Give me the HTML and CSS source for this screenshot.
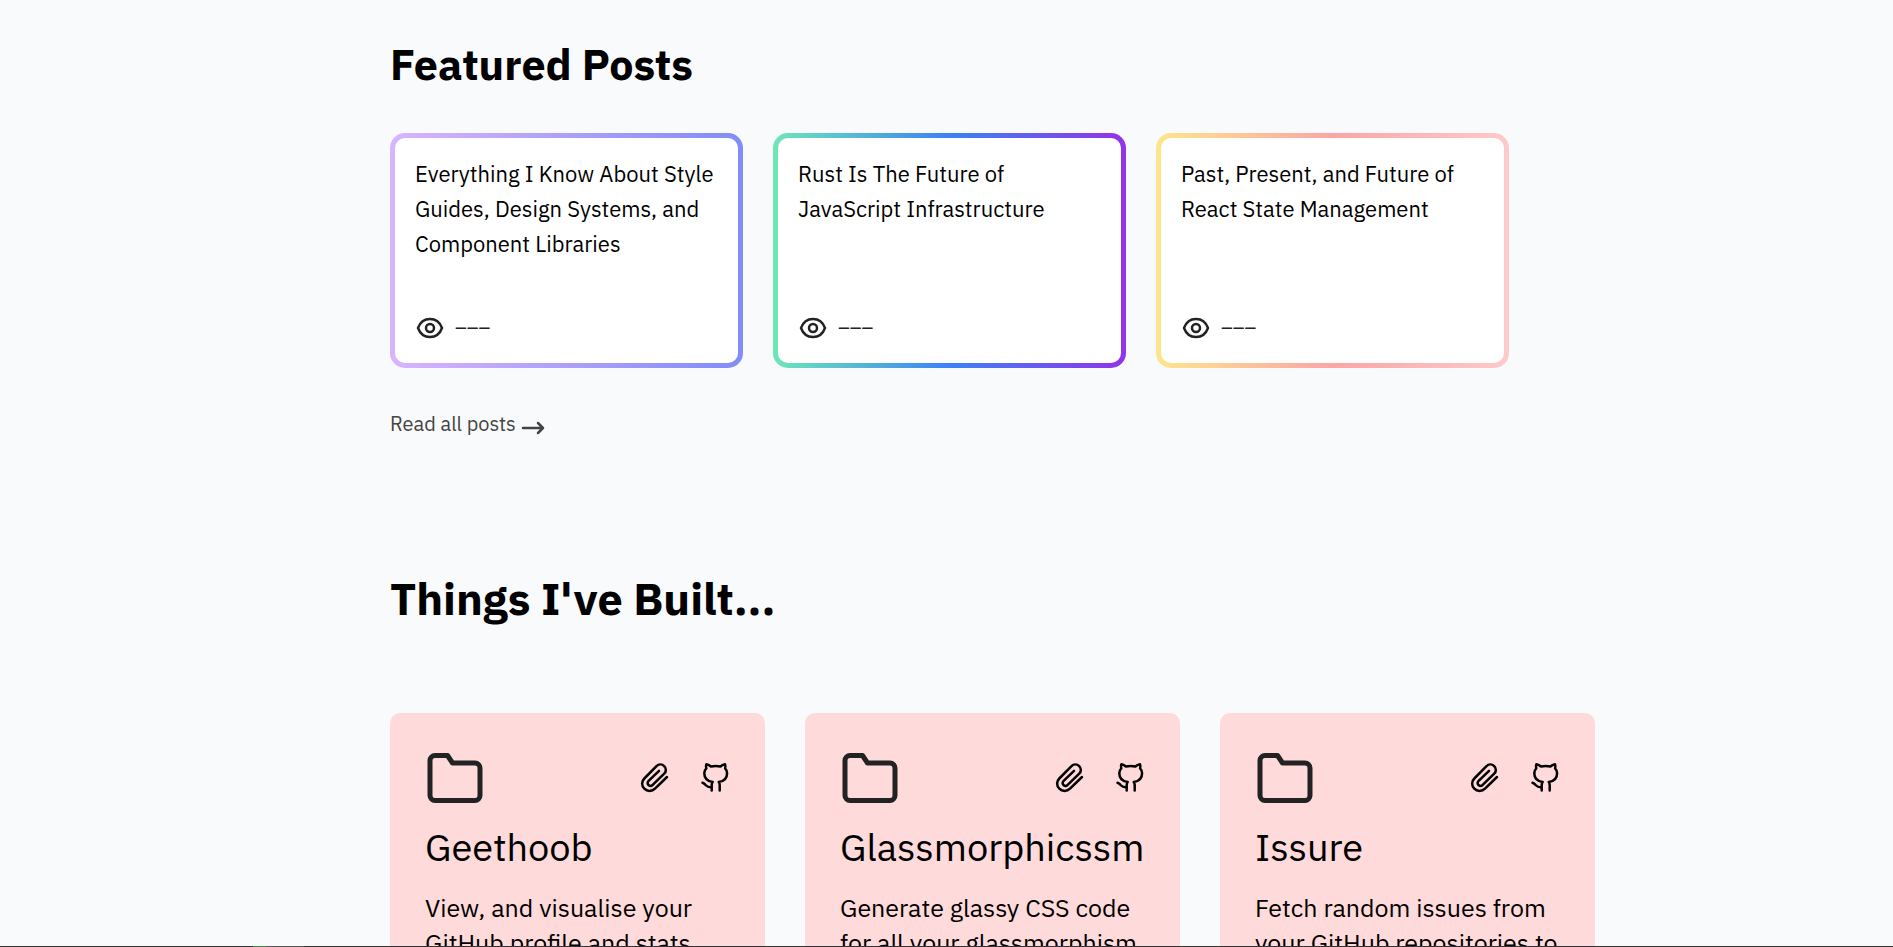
FILE: index.html
```html
<!DOCTYPE html>
<html lang="en">
<head>
<meta charset="utf-8">
<title>Featured Posts</title>
<link rel="stylesheet" href="styles.css">
</head>
<body>
<svg class="sprite" aria-hidden="true">
  <symbol id="eye" viewBox="0 0 30 30"><path d="M3 15C5 9.500 9.500 6 15 6s10 3.500 12 9c-2 5.500-6.500 9-12 9S5 20.500 3 15Z"/><circle cx="15" cy="15" r="4"/></symbol>
  <symbol id="arrow" viewBox="0 0 24 16"><path d="M2 8h20M17 3l5 5-5 5"/></symbol>
  <symbol id="folder" viewBox="0 0 24 24"><path d="M22 19a2 2 0 0 1-2 2H4a2 2 0 0 1-2-2V5a2 2 0 0 1 2-2h5l2 3h9a2 2 0 0 1 2 2z"/></symbol>
  <symbol id="clip" viewBox="0 0 30 32"><path d="M27 15 15 26.700c-3 2.900-7.800 2.900-10.700 0s-2.900-7.300 0-10.200L16.500 4.100c2.200-2.200 5.500-2.200 7.700 0s2.200 5.400 0 7.600L12.700 22.900c-1.300 1.300-3 1.300-4.200.1s-1.200-2.900.1-4.200L19 8.800"/></symbol>
  <symbol id="github" viewBox="0 0 30 32"><path d="M11.700 28.500V23c0-1.300.4-2.300 1-3C7.500 19.300 4.300 16 4.300 11.300c0-2.200.8-3.800 2-5-.5-1.400-.4-2.800.1-4 1.700.3 3.300 1 4.600 2.200 3-.5 6.400-.5 9.400 0 1.300-1.200 2.900-1.900 4.600-2.200.5 1.200.6 2.600.1 4 1.200 1.200 2 2.800 2 5 0 4.700-3.200 8-8.400 8.700.6.700 1 1.700 1 3v5.500M2.500 20.800c1.500.4 2.400 1.300 3.400 2.500 1.400 1.600 3.200 2.200 5.600 2"/></symbol>
</svg>
<main class="page">
  <section class="posts">
    <h2 class="heading heading--posts">Featured Posts</h2>
    <div class="post-grid">
      <a class="post post--violet" href="#style-guides"><span class="post-body"><span class="post-title">Everything I Know About Style Guides, Design Systems, and Component Libraries</span><span class="views"><svg class="eye"><use href="#eye"/></svg>–––</span></span></a>
      <a class="post post--ocean" href="#rust"><span class="post-body"><span class="post-title">Rust Is The Future of JavaScript Infrastructure</span><span class="views"><svg class="eye"><use href="#eye"/></svg>–––</span></span></a>
      <a class="post post--peach" href="#react-state"><span class="post-body"><span class="post-title">Past, Present, and Future of React State Management</span><span class="views"><svg class="eye"><use href="#eye"/></svg>–––</span></span></a>
    </div>
    <a class="read-all" href="#posts">Read all posts<svg class="arrow"><use href="#arrow"/></svg></a>
  </section>
  <section class="projects">
    <h2 class="heading">Things I've Built...</h2>
    <div class="project-grid">
      <article class="project">
        <div class="project-bar"><svg class="folder"><use href="#folder"/></svg><a class="tool" href="#geethoob" aria-label="Open Geethoob"><svg class="tool-icon"><use href="#clip"/></svg></a><a class="tool" href="#geethoob-code" aria-label="Geethoob on GitHub"><svg class="tool-icon"><use href="#github"/></svg></a></div>
        <h3 class="project-name">Geethoob</h3>
        <p class="project-text">View, and visualise your<br>GitHub profile and stats</p>
      </article>
      <article class="project">
        <div class="project-bar"><svg class="folder"><use href="#folder"/></svg><a class="tool" href="#glass" aria-label="Open Glassmorphicssm"><svg class="tool-icon"><use href="#clip"/></svg></a><a class="tool" href="#glass-code" aria-label="Glassmorphicssm on GitHub"><svg class="tool-icon"><use href="#github"/></svg></a></div>
        <h3 class="project-name">Glassmorphicssm</h3>
        <p class="project-text">Generate glassy CSS code<br>for all your glassmorphism</p>
      </article>
      <article class="project">
        <div class="project-bar"><svg class="folder"><use href="#folder"/></svg><a class="tool" href="#issure" aria-label="Open Issure"><svg class="tool-icon"><use href="#clip"/></svg></a><a class="tool" href="#issure-code" aria-label="Issure on GitHub"><svg class="tool-icon"><use href="#github"/></svg></a></div>
        <h3 class="project-name">Issure</h3>
        <p class="project-text">Fetch random issues from<br>your GitHub repositories to</p>
      </article>
    </div>
  </section>
</main>
<div class="edge"></div>
</body>
</html>
```
FILE: styles.css
```css
* { box-sizing: border-box; }
body {
  margin: 0;
  height: 100vh;
  overflow: hidden;
  background: #f8fafc;
  color: #000;
  font-family: "IBM Plex Sans", "Open Sans", sans-serif;
}
a { color: inherit; text-decoration: none; }
svg { fill: none; stroke: currentColor; stroke-linecap: round; stroke-linejoin: round; }
.sprite { position: absolute; width: 0; height: 0; }
.page { padding: 34px 298px 0 390px; }
.heading { margin: 0; font-size: 45px; line-height: 60px; font-weight: 700; }
.heading--posts { font-size: 43px; }

.post-grid {
  display: grid;
  grid-template-columns: repeat(3, 1fr);
  gap: 30px;
  max-width: 1119px;
  margin-top: 39px;
}
.post { padding: 5px; border-radius: 15px; }
.post--violet { background: linear-gradient(to right, #d8b4fe, #818cf8); }
.post--ocean { background: linear-gradient(to right, #6ee7b7, #3b82f6, #9333ea); }
.post--peach { background: linear-gradient(to right, #fde68a, #fca5a5, #fecaca); }
.post-body {
  display: flex;
  flex-direction: column;
  justify-content: space-between;
  min-height: 225px;
  padding: 18px 20px 20px;
  border-radius: 10px;
  background: #fff;
  color: #000;
}
.post-title { font-size: 22px; line-height: 35px; font-weight: 400; }
.views { display: flex; align-items: center; gap: 10px; color: #222; font-size: 20px; line-height: 30px; }
.eye { width: 30px; height: 30px; stroke-width: 2.5; }
.read-all {
  display: inline-flex;
  align-items: center;
  gap: 5px;
  margin-top: 39px;
  color: #444;
  font-size: 20px;
  line-height: 34px;
}
.arrow { width: 24px; height: 16px; margin-top: 8px; stroke-width: 2.5; }

.projects { padding-top: 127px; }
.project-grid { display: grid; grid-template-columns: repeat(3, 1fr); gap: 40px; margin-top: 85px; }
.project { padding: 35px; border-radius: 10px; background: #ffdada; }
.project-bar { display: flex; align-items: center; gap: 30px; }
.folder { width: 60px; height: 60px; margin-right: auto; color: #222; stroke-width: 2; }
.tool, .tool-icon { display: block; width: 30px; height: 32px; stroke-width: 2.5; }
.project-name { margin: 9px 0 0; font-size: 38px; line-height: 60px; font-weight: 400; }
.project-text { margin: 13px 0 0; font-size: 25px; line-height: 35px; }

.edge {
  position: fixed;
  inset: auto 0 0;
  height: 1px;
  background: linear-gradient(to right, #333 253px, #4a7c4a 253px 266px, #555 266px 304px, #333 304px);
}
```
